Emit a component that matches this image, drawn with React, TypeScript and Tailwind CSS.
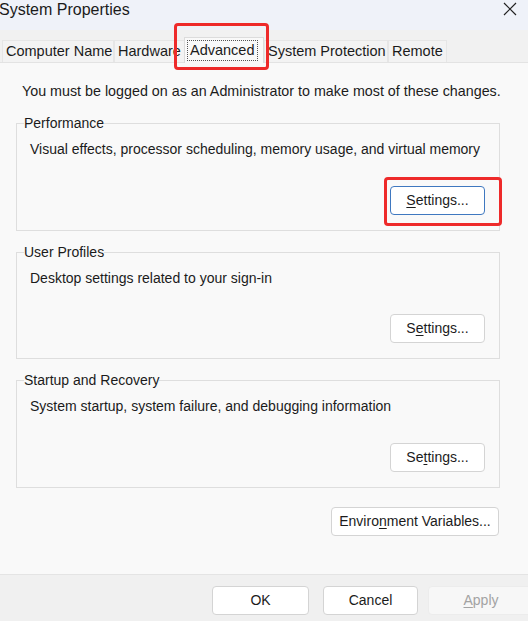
import type { ReactNode } from 'react';

const FONT = { fontFamily: '"Liberation Sans", Arial, sans-serif' };

function Mnemonic({ text, at }: { text: string; at: number }) {
  return (
    <>
      {text.slice(0, at)}
      <span className="underline underline-offset-2">{text[at]}</span>
      {text.slice(at + 1)}
    </>
  );
}

function WinButton({
  children,
  className = '',
  focused = false,
  disabled = false,
}: {
  children: ReactNode;
  className?: string;
  focused?: boolean;
  disabled?: boolean;
}) {
  return (
    <button
      type="button"
      className={[
        'h-[29px] shrink-0 rounded-[4px] border text-[14px]',
        focused ? 'border-[#3f78c0] bg-white text-[#1b1b1b]' : '',
        disabled ? 'border-[#ececec] bg-[#f7f7f7] text-[#a3a3a3]' : '',
        !focused && !disabled ? 'border-[#d4d4d4] bg-white text-[#1b1b1b]' : '',
        className,
      ].join(' ')}
    >
      {children}
    </button>
  );
}

function Group({
  title,
  desc,
  mnemonicAt,
  focused,
  descGap,
}: {
  title: string;
  desc: string;
  mnemonicAt: number;
  focused?: boolean;
  descGap: string;
}) {
  return (
    <fieldset className="ml-[16px] mr-[28px] border border-[#dedede] pl-[7px] pr-[14px] pb-[15px]">
      <legend className="px-0 text-[14px] leading-[16px] text-[#1b1b1b]">{title}</legend>
      <p className="mt-[10px] pl-[6px] text-[14px] leading-[16px] text-[#1b1b1b]">{desc}</p>
      <div className={['flex justify-end', descGap].join(' ')}>
        <WinButton focused={focused} className="w-[95px]">
          <Mnemonic text="Settings..." at={mnemonicAt} />
        </WinButton>
      </div>
    </fieldset>
  );
}

const TABS = [
  { label: 'Computer Name', w: 'w-[112px]' },
  { label: 'Hardware', w: 'w-[71px]' },
  { label: 'Advanced', w: 'w-[80px]' },
  { label: 'System Protection', w: 'w-[124px]' },
  { label: 'Remote', w: 'w-[59px]' },
];

export default function App() {
  return (
    <div className="relative flex h-[621px] w-[528px] flex-col overflow-hidden bg-[#f9f9f9]" style={FONT}>
      {/* title bar */}
      <div className="flex h-[30px] shrink-0 items-start justify-between bg-[#eff2f9] pr-[6px]">
        <span className="-ml-[1px] text-[16px] leading-[19px] text-[#1b1b1b]">System Properties</span>
        <svg width="16" height="16" viewBox="0 0 16 16" className="mr-[4px] mt-[1px]">
          <path d="M2 2 L14 14 M14 2 L2 14" stroke="#222" strokeWidth="1.2" fill="none" />
        </svg>
      </div>

      {/* tab strip */}
      <div className="flex h-[33px] shrink-0 items-end border-b border-[#e3e3e3] bg-[#f1f1f1] pl-[2px]">
        {TABS.map((tab) =>
          tab.label === 'Advanced' ? (
            <div
              key={tab.label}
              className={[
                '-mb-px -ml-[1px] flex h-[26px] items-center border border-b-0 border-[#dcdcdc] bg-[#f9f9f9] pl-[2px]',
                tab.w,
              ].join(' ')}
            >
              <span className="border border-dotted border-[#555] px-[2px] text-[14.5px] leading-[19px] text-[#1b1b1b]">
                {tab.label}
              </span>
            </div>
          ) : (
            <div
              key={tab.label}
              className={[
                'flex h-[22px] items-center overflow-hidden whitespace-nowrap border border-b-0 border-[#e6e6e6] bg-[#f3f3f3] pl-[3px] text-[14.5px] text-[#1b1b1b]',
                tab.w,
              ].join(' ')}
            >
              {tab.label}
            </div>
          ),
        )}
      </div>

      {/* content */}
      <div className="flex flex-1 flex-col">
        <p className="mt-[20px] whitespace-nowrap pl-[22px] text-[14.3px] leading-[16px] text-[#1b1b1b]">
          You must be logged on as an Administrator to make most of these changes.
        </p>
        <div className="mt-[16px] flex flex-col gap-[13px]">
          <Group
            title="Performance"
            desc="Visual effects, processor scheduling, memory usage, and virtual memory"
            mnemonicAt={0}
            focused
            descGap="mt-[29px]"
          />
          <Group
            title="User Profiles"
            desc="Desktop settings related to your sign-in"
            mnemonicAt={1}
            descGap="mt-[28px]"
          />
          <Group
            title="Startup and Recovery"
            desc="System startup, system failure, and debugging information"
            mnemonicAt={2}
            descGap="mt-[29px]"
          />
        </div>
        <div className="mt-[19px] flex justify-end pr-[29px]">
          <WinButton className="w-[168px]">
            <Mnemonic text="Environment Variables..." at={6} />
          </WinButton>
        </div>
      </div>

      {/* footer */}
      <div className="flex h-[47px] shrink-0 items-start border-t border-[#e4e4e4] bg-[#f0f0f0] pl-[212px] pt-[11px]">
        <WinButton className="w-[97px]">OK</WinButton>
        <WinButton className="ml-[14px] w-[95px]">Cancel</WinButton>
        <WinButton disabled className="ml-[10px] w-[106px]">
          <Mnemonic text="Apply" at={0} />
        </WinButton>
      </div>

      {/* annotation highlights */}
      <div className="pointer-events-none absolute left-[174px] top-[23px] h-[47px] w-[95px] rounded-[4px] border-[3px] border-[#ee2a2a]" />
      <div className="pointer-events-none absolute left-[384px] top-[177px] h-[49px] w-[118px] rounded-[4px] border-[3px] border-[#ee2a2a]" />
    </div>
  );
}
